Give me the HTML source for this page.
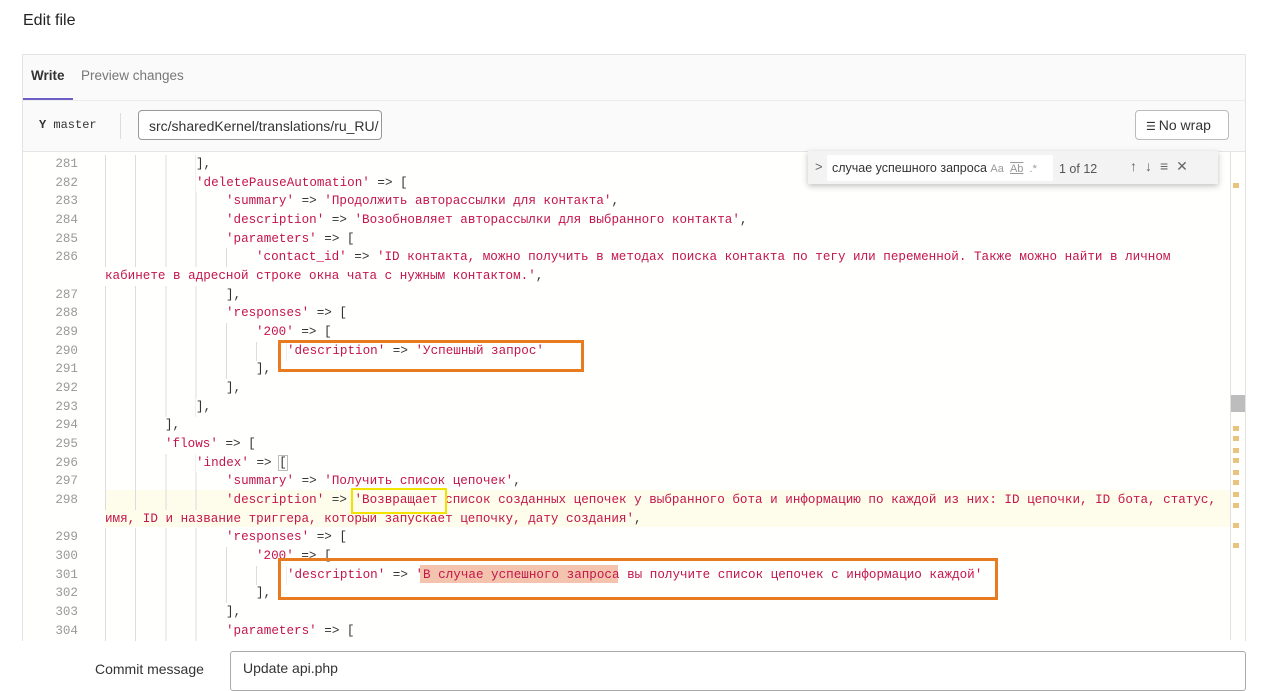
<!DOCTYPE html>
<html><head><meta charset="utf-8"><style>
body{margin:0;width:1280px;height:681px;overflow:hidden;background:#fff;font-family:"Liberation Sans","Noto Sans CJK SC",sans-serif;position:relative;color:#333}
.abs{position:absolute}
.box{left:22px;top:54px;width:1222px;height:586px;border:1px solid #e3e3e3;background:#fffffe}
.code{font-family:"Liberation Mono","DejaVu Sans Mono",monospace;font-size:12.6px;white-space:pre;color:#333}
.ln{position:absolute;left:30px;width:48px;text-align:right;color:#999;font-family:"Liberation Mono",monospace;font-size:12.6px}
.row{position:absolute;left:105px;height:18.7px;line-height:18.7px}
.s{color:#c4154a}
.g{display:inline-block;height:18.7px;vertical-align:top;background:repeating-linear-gradient(to right,#dcdcdc 0 1px,transparent 1px 30.24px)}
.ob{position:absolute;border:3px solid #e87b1f}
.mk{position:absolute;left:1233px;width:6px;height:5px;background:#e9c47f}
</style></head><body>
<div class="abs" style="left:23px;top:12px;font-size:16px;color:#222">Edit file</div>
<div class="abs box"></div>
<div class="abs" style="left:23px;top:55px;width:1222px;height:45px;background:#fafafa;border-bottom:1px solid #ececec"></div>
<div class="abs" style="left:31px;top:68px;font-size:13.5px;font-weight:bold;color:#333">Write</div>
<div class="abs" style="left:81px;top:68px;font-size:13.5px;color:#777">Preview changes</div>
<div class="abs" style="left:23px;top:98px;width:50px;height:2px;background:#6b5fc7"></div>
<div class="abs" style="left:23px;top:101px;width:1222px;height:50px;background:#fafafa;border-bottom:1px solid #e5e5e5"></div>
<div class="abs" style="left:39px;top:118px;font-size:12px;font-family:'Liberation Mono',monospace;color:#333"><b>Y</b> master</div>
<div class="abs" style="left:120px;top:113px;width:1px;height:26px;background:#ddd"></div>
<div class="abs" style="left:138px;top:110px;width:244px;height:30px;border:1px solid #999;border-radius:4px;background:#fff;font-size:14px;line-height:30px;box-sizing:border-box;padding-left:10px;color:#333">src/sharedKernel/translations/ru_RU/</div>
<div class="abs" style="left:1135px;top:110px;width:94px;height:30px;border:1px solid #bbb;border-radius:4px;background:#fff;font-size:14px;line-height:29px;box-sizing:border-box;padding-left:10px;color:#333"><span style="font-size:11px;letter-spacing:-1px">☰</span> No wrap</div>
<div class="abs" style="left:1230px;top:152px;width:1px;height:488px;background:#e0e0e0"></div>
<div class="abs" style="left:1231px;top:395px;width:14px;height:17px;background:#bdbdbd"></div>
<div class="mk" style="top:183px"></div><div class="mk" style="top:426px"></div><div class="mk" style="top:436px"></div><div class="mk" style="top:448px"></div><div class="mk" style="top:458px"></div><div class="mk" style="top:470px"></div><div class="mk" style="top:480px"></div><div class="mk" style="top:492px"></div><div class="mk" style="top:503px"></div><div class="mk" style="top:523px"></div><div class="mk" style="top:543px"></div>
<div class="abs" style="left:105px;top:490px;width:1125px;height:37px;background:#fefdec"></div>
<div class="abs" style="left:420px;top:565px;width:198px;height:18px;background:#f4c3ad"></div>
<div class="code">
<div class="ln" style="top:155px;line-height:18.7px">281</div><div class="row" style="top:155px"><span class="g" style="width:91px"></span>],</div>
<div class="ln" style="top:174px;line-height:18.7px">282</div><div class="row" style="top:174px"><span class="g" style="width:91px"></span><span class="s">'deletePauseAutomation'</span> =&gt; [</div>
<div class="ln" style="top:192px;line-height:18.7px">283</div><div class="row" style="top:192px"><span class="g" style="width:121px"></span><span class="s">'summary'</span> =&gt; <span class="s">'Продолжить авторассылки для контакта'</span>,</div>
<div class="ln" style="top:211px;line-height:18.7px">284</div><div class="row" style="top:211px"><span class="g" style="width:121px"></span><span class="s">'description'</span> =&gt; <span class="s">'Возобновляет авторассылки для выбранного контакта'</span>,</div>
<div class="ln" style="top:230px;line-height:18.7px">285</div><div class="row" style="top:230px"><span class="g" style="width:121px"></span><span class="s">'parameters'</span> =&gt; [</div>
<div class="ln" style="top:248px;line-height:18.7px">286</div><div class="row" style="top:248px"><span class="g" style="width:151px"></span><span class="s">'contact_id'</span> =&gt; <span class="s">'ID контакта, можно получить в методах поиска контакта по тегу или переменной. Также можно найти в личном</span></div>
<div class="row" style="top:267px"><span class="s">кабинете в адресной строке окна чата с нужным контактом.'</span>,</div>
<div class="ln" style="top:286px;line-height:18.7px">287</div><div class="row" style="top:286px"><span class="g" style="width:121px"></span>],</div>
<div class="ln" style="top:304px;line-height:18.7px">288</div><div class="row" style="top:304px"><span class="g" style="width:121px"></span><span class="s">'responses'</span> =&gt; [</div>
<div class="ln" style="top:323px;line-height:18.7px">289</div><div class="row" style="top:323px"><span class="g" style="width:151px"></span><span class="s">'200'</span> =&gt; [</div>
<div class="ln" style="top:342px;line-height:18.7px">290</div><div class="row" style="top:342px"><span class="g" style="width:182px"></span><span class="s">'description'</span> =&gt; <span class="s">'Успешный запрос'</span></div>
<div class="ln" style="top:360px;line-height:18.7px">291</div><div class="row" style="top:360px"><span class="g" style="width:151px"></span>],</div>
<div class="ln" style="top:379px;line-height:18.7px">292</div><div class="row" style="top:379px"><span class="g" style="width:121px"></span>],</div>
<div class="ln" style="top:398px;line-height:18.7px">293</div><div class="row" style="top:398px"><span class="g" style="width:91px"></span>],</div>
<div class="ln" style="top:416px;line-height:18.7px">294</div><div class="row" style="top:416px"><span class="g" style="width:60px"></span>],</div>
<div class="ln" style="top:435px;line-height:18.7px">295</div><div class="row" style="top:435px"><span class="g" style="width:60px"></span><span class="s">'flows'</span> =&gt; [</div>
<div class="ln" style="top:454px;line-height:18.7px">296</div><div class="row" style="top:454px"><span class="g" style="width:91px"></span><span class="s">'index'</span> =&gt; <span style="outline:1px solid #bbb">[</span></div>
<div class="ln" style="top:472px;line-height:18.7px">297</div><div class="row" style="top:472px"><span class="g" style="width:121px"></span><span class="s">'summary'</span> =&gt; <span class="s">'Получить список цепочек'</span>,</div>
<div class="ln" style="top:491px;line-height:18.7px">298</div><div class="row" style="top:491px"><span class="g" style="width:121px"></span><span class="s">'description'</span> =&gt; <span class="s">'Возвращает список созданных цепочек у выбранного бота и информацию по каждой из них: ID цепочки, ID бота, статус,</span></div>
<div class="row" style="top:510px"><span class="s">имя, ID и название триггера, который запускает цепочку, дату создания'</span>,</div>
<div class="ln" style="top:528px;line-height:18.7px">299</div><div class="row" style="top:528px"><span class="g" style="width:121px"></span><span class="s">'responses'</span> =&gt; [</div>
<div class="ln" style="top:547px;line-height:18.7px">300</div><div class="row" style="top:547px"><span class="g" style="width:151px"></span><span class="s">'200'</span> =&gt; [</div>
<div class="ln" style="top:566px;line-height:18.7px">301</div><div class="row" style="top:566px"><span class="g" style="width:182px"></span><span class="s">'description'</span> =&gt; <span class="s">'В случае успешного запроса вы получите список цепочек с информацио каждой'</span></div>
<div class="ln" style="top:584px;line-height:18.7px">302</div><div class="row" style="top:584px"><span class="g" style="width:151px"></span>],</div>
<div class="ln" style="top:603px;line-height:18.7px">303</div><div class="row" style="top:603px"><span class="g" style="width:121px"></span>],</div>
<div class="ln" style="top:622px;line-height:18.7px">304</div><div class="row" style="top:622px"><span class="g" style="width:121px"></span><span class="s">'parameters'</span> =&gt; [</div>
</div>
<div class="abs" style="left:22px;top:641px;width:1258px;height:40px;background:#fff"></div>
<div class="ob" style="left:278px;top:340px;width:300px;height:26px"></div>
<div class="ob" style="left:278px;top:558px;width:714px;height:36px"></div>
<div class="abs" style="left:351px;top:488px;width:92px;height:22px;border:2px solid #f2e200"></div>
<div class="abs" style="left:808px;top:151px;width:410px;height:33px;background:#f3f3f3;box-shadow:0 2px 6px rgba(0,0,0,.25)"></div>
<div class="abs" style="left:827px;top:155px;width:226px;height:26px;background:#fff"></div>
<div class="abs" style="left:815px;top:159px;font-size:13px;color:#666">&gt;</div>
<div class="abs" style="left:832px;top:161px;font-size:12.5px;color:#333">случае успешного запроса <span style="color:#999;font-size:11px">Aa &nbsp;<u style="text-decoration:overline underline">Ab</u>&nbsp; .*</span></div>
<div class="abs" style="left:1059px;top:162px;font-size:12.5px;color:#555">1 of 12</div>
<div class="abs" style="left:1130px;top:158px;font-size:14px;color:#666;letter-spacing:8px">↑↓≡✕</div>
<div class="abs" style="left:95px;top:661px;font-size:14px;color:#333">Commit message</div>
<div class="abs" style="left:230px;top:651px;width:1016px;height:40px;border:1px solid #aaa;border-radius:3px;box-sizing:border-box;padding:8px 12px;font-size:14px;color:#333">Update api.php</div>
</body></html>
